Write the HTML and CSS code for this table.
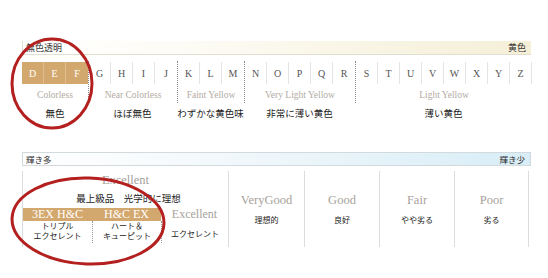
FILE: index.html
```html
<!DOCTYPE html>
<html lang="ja">
<head>
<meta charset="utf-8">
<title>Diamond grades</title>
<link rel="stylesheet" href="styles.css">
</head>
<body>
<div class="page">
  <section class="color">
    <div class="bar bar-color"><span>無色透明</span><span>黄色</span></div>
    <div class="groups">
      <div class="group">
        <div class="box">
          <div class="cells">
            <span class="cell tan">D</span><span class="cell tan">E</span><span class="cell tan">F</span>
          </div>
          <div class="en">Colorless</div>
        </div>
        <div class="jp">無色</div>
      </div>
      <div class="group">
        <div class="box dotted">
          <div class="cells">
            <span class="cell">G</span><span class="cell">H</span><span class="cell">I</span><span class="cell">J</span>
          </div>
          <div class="en">Near Colorless</div>
        </div>
        <div class="jp">ほぼ無色</div>
      </div>
      <div class="group">
        <div class="box dotted">
          <div class="cells">
            <span class="cell">K</span><span class="cell">L</span><span class="cell">M</span>
          </div>
          <div class="en">Faint Yellow</div>
        </div>
        <div class="jp">わずかな黄色味</div>
      </div>
      <div class="group">
        <div class="box dotted">
          <div class="cells">
            <span class="cell">N</span><span class="cell">O</span><span class="cell">P</span><span class="cell">Q</span><span class="cell">R</span>
          </div>
          <div class="en">Very Light Yellow</div>
        </div>
        <div class="jp">非常に薄い黄色</div>
      </div>
      <div class="group last">
        <div class="box dotted">
          <div class="cells">
            <span class="cell">S</span><span class="cell">T</span><span class="cell">U</span><span class="cell">V</span><span class="cell">W</span><span class="cell">X</span><span class="cell">Y</span><span class="cell">Z</span>
          </div>
          <div class="en">Light Yellow</div>
        </div>
        <div class="jp">薄い黄色</div>
      </div>
    </div>
  </section>

  <section class="cut">
    <div class="bar bar-cut"><span>輝き多</span><span>輝き少</span></div>
    <div class="cols">
      <div class="col col-ex">
        <div class="ex-title">Excellent</div>
        <div class="ex-sub">最上級品　光学的に理想</div>
        <div class="subs">
          <div class="sub-head tan">3EX H&amp;C</div>
          <div class="sub-head tan">H&amp;C EX</div>
          <div class="sub-head plain">Excellent</div>
          <div class="sub-jp">トリプル<br>エクセレント</div>
          <div class="sub-jp dot">ハート＆<br>キューピット</div>
          <div class="sub-jp dot single">エクセレント</div>
        </div>
      </div>
      <div class="col col-grade wide"><div class="grade">VeryGood</div><div class="gjp">理想的</div></div>
      <div class="col col-grade"><div class="grade">Good</div><div class="gjp">良好</div></div>
      <div class="col col-grade"><div class="grade">Fair</div><div class="gjp">やや劣る</div></div>
      <div class="col col-grade end"><div class="grade">Poor</div><div class="gjp">劣る</div></div>
    </div>
  </section>

  <svg class="marks" width="548" height="278" viewBox="0 0 548 278" aria-hidden="true">
    <ellipse cx="52" cy="83.5" rx="40" ry="44.5" fill="none" stroke="#b3201f" stroke-width="3"/>
    <ellipse cx="88" cy="221" rx="76" ry="43" fill="none" stroke="#b3201f" stroke-width="3" transform="rotate(2 88 221)"/>
  </svg>
</div>
</body>
</html>
```

FILE: styles.css
```css
* { box-sizing: border-box; }

html, body {
  margin: 0;
  padding: 0;
  background: #ffffff;
}

body {
  font-family: "Noto Sans CJK JP", "Noto Sans", sans-serif;
  color: #222;
}

.page {
  position: relative;
  width: 548px;
  height: 278px;
  padding: 41px 0 0 22px;
  overflow: hidden;
}

/* ---------- header bars ---------- */
.bar {
  display: flex;
  justify-content: space-between;
  align-items: center;
  height: 14px;
  font-size: 9px;
  line-height: 12px;
  color: #333;
  padding: 0 5px 0 3px;
}

.bar-color {
  width: 509px;
  background: linear-gradient(to right, #ffffff 0%, #fdfcf6 30%, #f5efd7 100%);
  border-left: 1px solid #dedbd0;
  border-bottom: 1px solid #e2ded0;
}

.bar-cut {
  width: 509px;
  font-size: 8.5px;
  background: linear-gradient(to right, #ffffff 0%, #f6fafc 30%, #d8edf7 100%);
  border: 1px solid #d3dadd;
}

/* ---------- colour grades ---------- */
.groups {
  display: flex;
  margin-top: 6px;
}

.group {
  display: flex;
  flex-direction: column;
}

.box {
  padding: 1px 0 2px 0;
}

.box.dotted {
  border-left: 1px dotted #8a8a8a;
}

.cells {
  display: flex;
}

.cell {
  display: flex;
  align-items: center;
  justify-content: center;
  width: 22px;
  height: 22px;
  border-right: 1px solid #e4e4e4;
  font-family: "Liberation Serif", serif;
  font-size: 10px;
  color: #555;
}

.group .cell:last-child {
  border-right: none;
}

.group.last .cell:last-child {
  border-right: 1px solid #e4e4e4;
}

.cell.tan {
  background: #d3a86e;
  color: #fff;
  border-right: 1px solid #dfbd8e;
}

.en {
  margin-top: 5px;
  font-family: "Liberation Serif", serif;
  font-size: 9.5px;
  line-height: 12px;
  color: #b2aba3;
  text-align: center;
  white-space: nowrap;
}

.jp {
  margin-top: 4px;
  font-size: 9.5px;
  line-height: 12px;
  color: #222;
  text-align: center;
  white-space: nowrap;
}

/* ---------- cut grades ---------- */
.cut {
  margin-top: 33px;
}

.cols {
  display: flex;
  margin-top: 5px;
  height: 76px;
}

.col {
  border-left: 1px solid #dcdcdc;
}

.col-ex {
  width: 206px;
  display: flex;
  flex-direction: column;
  align-items: stretch;
}

.ex-title {
  margin-top: 2px;
  font-family: "Liberation Serif", serif;
  font-size: 12.5px;
  line-height: 14px;
  color: #a7a29b;
  text-align: center;
}

.ex-sub {
  margin-top: 5px;
  padding-left: 6px;
  font-size: 9.5px;
  line-height: 12px;
  color: #222;
  text-align: center;
  white-space: nowrap;
}

.subs {
  display: grid;
  grid-template-columns: 69px 69px 1fr;
  margin-top: 4px;
}

.sub-head {
  height: 13px;
  font-family: "Liberation Serif", serif;
  font-size: 12px;
  line-height: 13px;
  text-align: center;
  white-space: nowrap;
}

.sub-head.tan {
  background: #d3a86e;
  color: #fff;
}

.sub-head.plain {
  color: #a7a29b;
}

.sub-jp {
  padding: 0 0 2px 0;
  font-size: 8px;
  line-height: 10px;
  color: #222;
  text-align: center;
  white-space: nowrap;
}

.sub-jp.dot {
  border-left: 1px dotted #999;
}

.sub-jp.single {
  padding-top: 8px;
}

.col-grade {
  width: 75px;
  display: flex;
  flex-direction: column;
  align-items: center;
  justify-content: center;
}

.col-grade.wide {
  width: 76px;
}

.col-grade.end {
  border-right: 1px solid #dcdcdc;
}

.grade {
  font-family: "Liberation Serif", serif;
  font-size: 12.5px;
  line-height: 14px;
  color: #a7a29b;
}

.gjp {
  margin-top: 8px;
  font-size: 8px;
  line-height: 10px;
  color: #222;
}

/* ---------- red hand-drawn marks ---------- */
.marks {
  position: absolute;
  top: 0;
  left: 0;
  pointer-events: none;
}
```
